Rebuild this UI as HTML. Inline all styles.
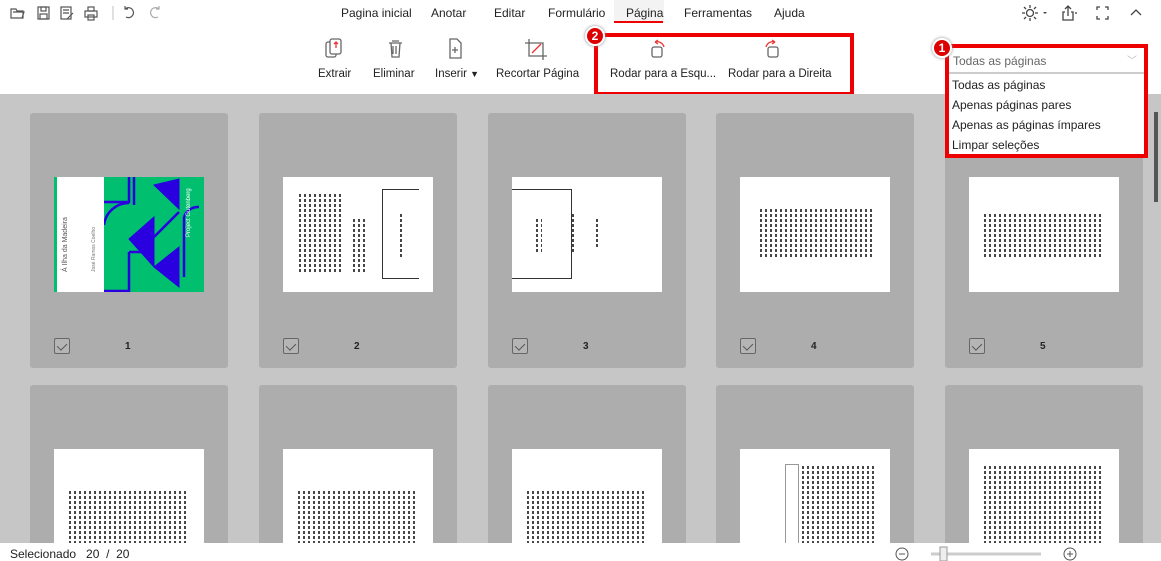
<!DOCTYPE html>
<html><head><meta charset="utf-8"><style>
*{margin:0;padding:0;box-sizing:border-box}
html,body{width:1161px;height:561px;overflow:hidden}
body{background:#fff;font-family:"Liberation Sans",sans-serif;font-size:12px;color:#222;position:relative}
.a{position:absolute}
.menu span{position:absolute;top:6px;font-size:12px}
.lbl{position:absolute;top:68px;font-size:11.5px}
.gray{position:absolute;left:0;top:94px;width:1161px;height:449px;background:#c6c6c6;overflow:hidden}
.card{position:absolute;width:198px;height:255px;background:#adadad;border-radius:3px}
.th{position:absolute;left:24px;top:64px;width:150px;height:115px;background:#fff;overflow:hidden}
.cb{position:absolute;left:24px;top:225px;width:16px;height:16px;border:1px solid #666;border-radius:2px;background:#b5b5b5}
.cb:after{content:"";position:absolute;left:4px;top:2px;width:5px;height:8px;border:solid #555;border-width:0 1.3px 1.3px 0;transform:rotate(45deg)}
.num{position:absolute;left:95px;top:228px;font-size:10px;font-weight:bold}
.txt{position:absolute;background:repeating-linear-gradient(0deg,transparent 0 3px,#fff 3px 5px),repeating-linear-gradient(90deg,#333 0 2px,transparent 2px 5px);opacity:.9}
.red{position:absolute;border:4px solid #e00}
.badge{position:absolute;width:20px;height:20px;border-radius:50%;background:#d00;color:#fff;border:2px solid #fff;box-shadow:0 0 3px #888;font-size:12px;font-weight:bold;text-align:center;line-height:16px}
</style></head><body>
<svg class="a" style="left:10px;top:5px" width="160" height="16" fill="none" stroke="#555" stroke-width="1.2">
<path d="M1 4h5l1 2h6v7H1z M3 7h11l-2 6"/>
<rect x="28" y="2" width="11" height="12"/><rect x="31" y="2" width="5" height="4"/><rect x="30" y="9" width="7" height="5"/>
<rect x="51" y="2" width="10" height="12"/><path d="M53 5h6M53 8h6M57 14l6-6"/>
<rect x="75" y="6" width="12" height="6"/><rect x="78" y="2" width="6" height="4"/><rect x="78" y="10" width="6" height="5"/>
<path d="M103 1v14" stroke="#ccc"/>
<path d="M118 4h-3v-3M115 4a5 5 0 1 1 1 8"/>
<path d="M146 4h3v-3M149 4a5 5 0 1 0 -1 8" stroke="#aaa"/>
</svg>
<div class="menu">
<span style="left:341px">Pagina inicial</span><span style="left:431px">Anotar</span><span style="left:494px">Editar</span><span style="left:548px">Formulário</span>
<span style="left:614px;top:0;height:22px;width:50px;background:#f3f3f3;padding:6px 0 0 12px">Página</span>
<span style="left:684px">Ferramentas</span><span style="left:774px">Ajuda</span>
</div>
<div class="a" style="left:614px;top:21px;width:49px;height:2px;background:#e00"></div>
<svg class="a" style="left:1020px;top:4px" width="130" height="18" fill="none" stroke="#444" stroke-width="1.3">
<circle cx="10" cy="9" r="3.5"/><path d="M10 1v3M10 14v3M2 9h3M15 9h3M4 3l2 2M14 13l2 2M4 15l2-2M14 5l2-2"/>
<path d="M23 8l2 2 2-2" fill="#444" stroke="none"/>
<path d="M45 8h-2v8h10v-8h-2M48 12V2M45 5l3-3 3 3"/><path d="M55 9l2 0" />
<path d="M80 3h-3v3M85 3h3v3M80 15h-3v-3M85 15h3v-3"/>
<path d="M111 11l5-5 5 5"/>
</svg>
<svg class="a" style="left:320px;top:36px" width="270" height="26" fill="none" stroke="#666" stroke-width="1.3">
<rect x="6" y="6" width="10" height="15" rx="2"/><rect x="10" y="3" width="11" height="15" rx="2" fill="#fff"/><path d="M16 12V6M14 8l2-2 2 2" stroke="#e33"/>
<path d="M69 7h13M71 7l1 14h7l1-14M73 10v8M76 10v8M72 5h7"/>
<path d="M130 3h7l4 4v15h-11z M135 11v6M132 14h6"/>
<path d="M209 3v17h18M205 7h18v17" /><path d="M212 17l9-9" stroke="#e33"/>
</svg>
<div class="lbl" style="left:318px">Extrair</div><div class="lbl" style="left:373px">Eliminar</div>
<div class="lbl" style="left:435px">Inserir <span style="font-size:9px">▼</span></div><div class="lbl" style="left:496px">Recortar Página</div>
<svg class="a" style="left:640px;top:38px" width="160" height="22" fill="none" stroke-width="1.3">
<rect x="12" y="9" width="10" height="10" rx="2" stroke="#666"/><path d="M15 4a7 7 0 0 1 9 5M15 4l3-2M15 4l3 2" stroke="#e33"/>
<rect x="128" y="9" width="10" height="10" rx="2" stroke="#666"/><path d="M135 4a7 7 0 0 0 -9 5M135 4l-3-2M135 4l-3 2" stroke="#e33"/>
</svg>
<div class="lbl" style="left:610px">Rodar para a Esqu...</div><div class="lbl" style="left:728px">Rodar para a Direita</div>
<div class="red" style="left:594px;top:33px;width:260px;height:63px"></div>
<div class="badge" style="left:585px;top:26px">2</div>
<div class="gray">
<div class="a" style="left:1154px;top:18px;width:4px;height:90px;background:#555"></div>
<div class="card" style="left:30px;top:19px"><div class="th" style="background:#00bf6f">
 <div class="a" style="left:3px;top:0;width:47px;height:115px;background:#fff"></div>
 <div class="a" style="left:8px;top:95px;transform:rotate(-90deg);transform-origin:0 0;font-size:7px;color:#555;white-space:nowrap">Á Ilha da Madeira</div>
 <div class="a" style="left:37px;top:95px;transform:rotate(-90deg);transform-origin:0 0;font-size:5px;color:#777;white-space:nowrap">José Ramos Coelho</div>
 <svg class="a" style="left:50px;top:0" width="100" height="115" fill="#2a00e0" stroke="#2a00e0">
  <path d="M0 25h25v-25M30 0v28" fill="none" stroke-width="2.5"/><path d="M50 8l25 -6v30z"/>
  <path d="M0 48a25 25 0 0 1 25 -22" fill="none" stroke-width="2.5"/><path d="M25 62l25-22v50z"/><path d="M25 75h25M25 75v40M0 114h25" fill="none" stroke-width="2.5"/>
  <path d="M50 90l25 -20v40z"/><path d="M80 40v60M80 40a15 15 0 0 1 15 -10M50 60l25-25" fill="none" stroke-width="2.5"/>
 </svg>
 <div class="a" style="left:132px;top:60px;transform:rotate(-90deg);transform-origin:0 0;font-size:6px;color:#fff;white-space:nowrap">Project Gutenberg</div>
</div><div class="cb"></div><div class="num">1</div></div>
<div class="card" style="left:259px;top:19px"><div class="th">
 <div class="txt" style="left:16px;top:15px;width:45px;height:80px"></div><div class="txt" style="left:70px;top:40px;width:12px;height:55px"></div>
 <div class="a" style="left:99px;top:12px;width:37px;height:90px;border:1px solid #333;border-right:none"></div>
 <div class="txt" style="left:117px;top:35px;width:4px;height:45px"></div>
</div><div class="cb"></div><div class="num">2</div></div>
<div class="card" style="left:488px;top:19px"><div class="th">
 <div class="a" style="left:0;top:12px;width:60px;height:90px;border:1px solid #333;border-left:none"></div>
 <div class="txt" style="left:24px;top:40px;width:6px;height:35px"></div><div class="txt" style="left:60px;top:35px;width:4px;height:40px"></div><div class="txt" style="left:84px;top:40px;width:3px;height:30px"></div>
</div><div class="cb"></div><div class="num">3</div></div>
<div class="card" style="left:716px;top:19px"><div class="th">
 <div class="txt" style="left:20px;top:30px;width:115px;height:50px"></div>
</div><div class="cb"></div><div class="num">4</div></div>
<div class="card" style="left:945px;top:19px"><div class="th">
 <div class="txt" style="left:15px;top:35px;width:120px;height:45px"></div>
</div><div class="cb"></div><div class="num">5</div></div>
<div class="card" style="left:30px;top:291px"><div class="th"><div class="txt" style="left:15px;top:40px;width:120px;height:75px"></div></div></div>
<div class="card" style="left:259px;top:291px"><div class="th"><div class="txt" style="left:15px;top:40px;width:120px;height:75px"></div></div></div>
<div class="card" style="left:488px;top:291px"><div class="th"><div class="txt" style="left:15px;top:40px;width:120px;height:75px"></div></div></div>
<div class="card" style="left:716px;top:291px"><div class="th"><div class="a" style="left:45px;top:15px;width:14px;height:80px;border:1px solid #999"></div><div class="txt" style="left:62px;top:15px;width:75px;height:100px"></div></div></div>
<div class="card" style="left:945px;top:291px"><div class="th"><div class="txt" style="left:15px;top:15px;width:120px;height:100px"></div></div></div>
</div>
<div class="a" style="left:948px;top:47px;width:196px;height:27px;background:#fff;border-bottom:2px solid #ccc"></div>
<div class="a" style="left:953px;top:54px;font-size:12px;color:#666">Todas as páginas</div>
<div class="a" style="left:1127px;top:52px;color:#bbb;font-size:10px">﹀</div>
<div class="a" style="left:948px;top:74px;width:196px;height:83px;background:#fff"></div>
<div class="a" style="left:952px;top:75px;font-size:12px;line-height:20px">Todas as páginas<br>Apenas páginas pares<br>Apenas as páginas ímpares<br>Limpar seleções</div>
<div class="red" style="left:945px;top:44px;width:203px;height:114px"></div>
<div class="badge" style="left:932px;top:38px">1</div>
<div class="a" style="left:10px;top:547px;font-size:12px">Selecionado&nbsp;&nbsp; 20&nbsp; /&nbsp; 20</div>
<svg class="a" style="left:893px;top:546px" width="190" height="15" fill="none" stroke="#555">
<circle cx="9" cy="8" r="6"/><path d="M6 8h6"/>
<path d="M38 8h110" stroke="#ccc" stroke-width="3"/><rect x="47" y="1" width="7" height="14" fill="#eee" stroke="#999"/>
<circle cx="177" cy="8" r="6"/><path d="M174 8h6M177 5v6"/>
</svg>
</body></html>
